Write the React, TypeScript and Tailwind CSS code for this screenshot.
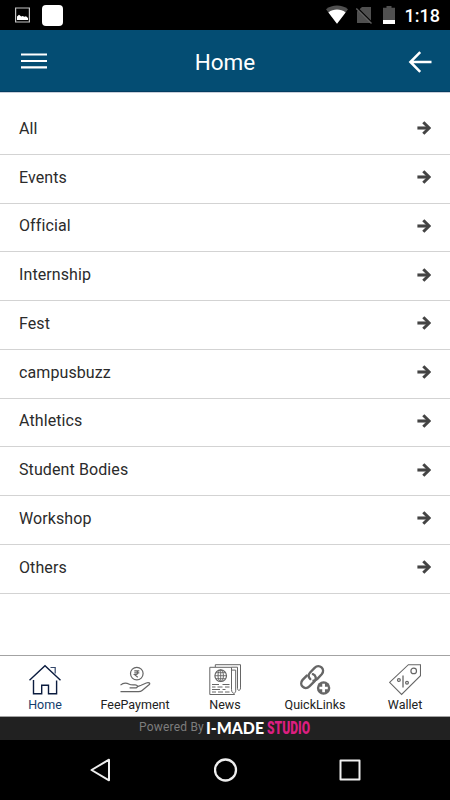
import type { ReactNode } from 'react';

const categories = [
  'All',
  'Events',
  'Official',
  'Internship',
  'Fest',
  'campusbuzz',
  'Athletics',
  'Student Bodies',
  'Workshop',
  'Others',
];

function TabIcon({ children, className = '' }: { children: ReactNode; className?: string }) {
  return (
    <svg viewBox="0 0 32 32" fill="none" stroke="currentColor" className={`block h-8 w-8 ${className}`}>
      {children}
    </svg>
  );
}

function HomeIcon() {
  return (
    <TabIcon className="text-[#0b1c3f]">
      <path d="M.5 16.3 16 1.7l15.5 14.6" strokeWidth="1.4" />
      <path d="M21.5 3.5h4.7v6" stroke="#33476b" strokeWidth="1.2" />
      <path d="M4.5 16v13.7h8.2v-8.5h6.8v8.5h8.1V16.5" strokeWidth="1.4" />
    </TabIcon>
  );
}

function FeeIcon() {
  return (
    <TabIcon className="text-[#666]">
      <circle cx="17.8" cy="9.6" r="6.3" strokeWidth="1.2" />
      <path d="M15.3 6.9h5M15.3 8.9h5M15.3 6.9h1.6c2.5 0 2.5 3.7 0 3.7h-1.4l3.3 2.7" strokeWidth="1.1" />
      <path
        d="M1.5 21.1c3-2.6 6.5-2 8.8-.8 1.5.8 3.3.5 5.7.6 3.2.2 3.2 3 .2 3h-5.6M18.5 22.6l3.6-1.4 5.2-2.2c2.3-1 4.4.2 3 1.5l-7.2 6c-1.2 1-2.6 1.2-4.2 1.1H1.5"
        strokeWidth="1.2"
      />
    </TabIcon>
  );
}

function NewsIcon() {
  return (
    <TabIcon className="text-[#666]">
      <path d="M.8 3.3h21.7v22c0 5 4.2 5 4.2 1.5V6.1H22.5M.8 3.3v27.2h25" strokeWidth="1" />
      <path d="M6.3 3V.7h25.2v23.2c0 3.2-3 3.2-3 .5V3.2H22.5" strokeWidth="1" />
      <circle cx="11.7" cy="11.7" r="5.8" strokeWidth="1.2" />
      <ellipse cx="11.7" cy="11.7" rx="2.7" ry="5.8" strokeWidth="1" />
      <path d="M11.7 6v11.5M6 11.7h11.5M7 8.7h9.4M7 14.7h9.4" strokeWidth=".9" />
      <path
        d="M3 20.5h7M13.5 20.5h7M3 23h3.5M8.5 23h5M16 23h4.5M3 25.5h8M13.5 25.5h3M3 28h4M9 28h5M16 28h4.5"
        strokeWidth="1"
      />
    </TabIcon>
  );
}

function LinksIcon() {
  return (
    <TabIcon className="text-[#666]">
      <g strokeWidth="2.4" strokeLinecap="round">
        <path d="M11.3 15.1c-2.2-1.8-2.1-4.6-.4-6.4l4.7-4.9c4.8-4.5 11.3 1.4 7.1 6.5l-4.8 5c-1 1.1-2.3 1.5-3.4 1.4" />
        <path d="M13.9 10.2c3 .9 4 4.6 1.5 7.2l-5 5c-4.7 4.5-11-1.6-6.8-6.5l4.2-4.3" />
      </g>
      <circle cx="24.6" cy="24" r="6.7" fill="currentColor" stroke="none" />
      <path d="M24.6 19.8v8.4M20.4 24h8.4" stroke="#fff" strokeWidth="2.7" />
    </TabIcon>
  );
}

function WalletIcon() {
  return (
    <TabIcon className="text-[#666]">
      <path d="M19.4.7h12.1v11L12.6 30.5.6 18.4z" strokeWidth="1.1" />
      <circle cx="24.7" cy="6.9" r="2.8" strokeWidth="1.2" />
      <circle cx="9.9" cy="16.1" r="1.4" strokeWidth="1.2" />
      <circle cx="18" cy="18.7" r="1.4" strokeWidth="1.2" />
      <path d="M14 11.5v12" strokeWidth="1.3" />
    </TabIcon>
  );
}

const tabs = [
  { label: 'Home', icon: <HomeIcon />, active: true },
  { label: 'FeePayment', icon: <FeeIcon /> },
  { label: 'News', icon: <NewsIcon /> },
  { label: 'QuickLinks', icon: <LinksIcon /> },
  { label: 'Wallet', icon: <WalletIcon /> },
];

function StatusBar() {
  return (
    <div className="flex h-[30px] items-center bg-black pl-[15px] pr-[10px]">
      <svg viewBox="0 0 15 16" className="h-4 w-[15px]">
        <path d="M.6 1h13.8v14H.6z" fill="none" stroke="#c4c4c4" strokeWidth="1.2" />
        <path d="M2 13V9.5L4 7.8l2.3 1.8L7.5 9l2 .8 1.5-.6 2 1.8v2z" fill="#fff" />
      </svg>
      <div className="ml-3 h-[21px] w-[21px] rounded-[4px] bg-white" />
      <svg viewBox="0 0 70 20" className="ml-auto h-5 w-[70px]">
        <path d="M0 4.3c6-5 16-5 22 0L11 18.7z" fill="#505050" />
        <path d="M2.4 7.4c5-3.8 12.2-3.8 17.2 0L11 18.7z" fill="#fff" />
        <path d="M36 2h9v16H31V6.5z" fill="#505050" />
        <path d="m31.5 3 15 15" stroke="#000" strokeWidth="1.4" />
        <path d="m30.3 3.4 15.2 15.2" stroke="#606060" strokeWidth="1.4" />
        <path d="M57 2.8h3.5V1h5v1.8H69V15H57z" fill="#505050" />
        <path d="M57 15h12v4H57z" fill="#fff" />
      </svg>
      <span className="ml-[9px] pt-px text-[18px] font-medium leading-[30px] text-white">1:18</span>
    </div>
  );
}

function Header() {
  return (
    <header className="grid h-[62px] grid-cols-3 items-center border-b border-[#033c60] bg-[#044d73] text-white">
      <svg viewBox="0 0 26 18" stroke="currentColor" strokeWidth="2.2" className="ml-[21px] h-[18px] w-[26px]">
        <path d="M0 2.5h26M0 9h26M0 15.4h26" />
      </svg>
      <h1 className="pt-[3px] text-center text-[22.5px] leading-none">Home</h1>
      <svg
        viewBox="0 0 24 22"
        fill="none"
        stroke="currentColor"
        strokeWidth="2.5"
        className="ml-auto mr-[18px] mt-[2px] h-[22px] w-6"
      >
        <path d="M12.2 1.2 2.4 11l9.8 9.8M2 11h21.5" />
      </svg>
    </header>
  );
}

function RowArrow() {
  return (
    <svg viewBox="0 0 14 14" fill="none" stroke="#444" className="mb-px h-3.5 w-3.5">
      <path d="M.4 7h11.4" strokeWidth="3.1" />
      <path d="m6.3 1.2 5.8 5.8-5.8 5.8" strokeWidth="3" />
    </svg>
  );
}

export default function App() {
  return (
    <div className="flex h-[800px] w-[450px] flex-col overflow-hidden bg-white font-[Roboto,sans-serif]">
      <StatusBar />
      <Header />

      <ul className="flex-1 border-t border-[#c9cfda] pt-[13px]">
        {categories.map((name) => (
          <li
            key={name}
            className="flex h-[48.75px] items-center justify-between border-b border-[#d3d3d3] pb-[1.9px] pl-[19px] pr-[19px] text-[16px] tracking-[0.1px] text-[#2b2b2b]"
          >
            {name}
            <RowArrow />
          </li>
        ))}
      </ul>

      <nav className="grid h-[62px] grid-cols-5 border-y border-[#a3a3a3] bg-white pt-2">
        {tabs.map((tab) => (
          <div key={tab.label} className="flex flex-col items-center">
            {tab.icon}
            <span
              className={`text-[12.5px] leading-[17px] ${tab.active ? 'text-[#123d6d]' : 'text-[#222]'}`}
            >
              {tab.label}
            </span>
          </div>
        ))}
      </nav>

      <div className="flex h-[23px] items-center bg-[#212121] pl-[139px]">
        <span className="w-[67px] whitespace-nowrap pb-[3px] text-[12px] leading-[15px] tracking-[0.2px] text-[#7d7d7d]">
          Powered By
        </span>
        <svg viewBox="0 0 120 23" className="h-[23px] w-[120px] overflow-visible" fontWeight="900">
          <text x="0" y="16.8" fill="#fff" fontFamily="Lato, sans-serif" fontSize="17.5" textLength="58" lengthAdjust="spacingAndGlyphs">
            I-MADE
          </text>
          <text x="61" y="16.8" fill="#dc1e80" fontFamily="Roboto, sans-serif" fontSize="17.5" textLength="43" lengthAdjust="spacingAndGlyphs">
            STUDIO
          </text>
        </svg>
      </div>

      <div className="flex h-[60px] items-center justify-between bg-black pl-[89px] pr-[88px]">
        <svg viewBox="0 0 24 24" className="h-6 w-6" fill="none" stroke="#eee" strokeWidth="2">
          <path d="M20 1.7v20.6L2.5 12z" strokeLinejoin="round" />
        </svg>
        <svg viewBox="0 0 24 24" className="h-6 w-6" fill="none" stroke="#eee" strokeWidth="2.3">
          <circle cx="11.5" cy="12" r="10.5" />
        </svg>
        <svg viewBox="0 0 24 24" className="h-6 w-6" fill="none" stroke="#eee" strokeWidth="2">
          <path d="M2.5 2.5h19v19h-19z" strokeLinejoin="round" />
        </svg>
      </div>
    </div>
  );
}
